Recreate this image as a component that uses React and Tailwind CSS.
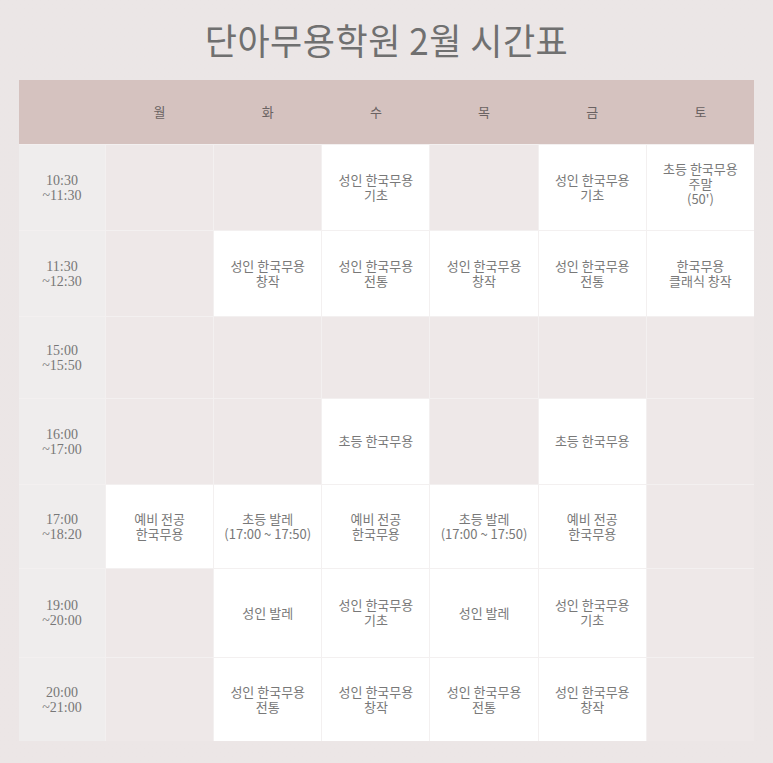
import React from "react";

const days = ["월", "화", "수", "목", "금", "토"];

const rows = [
  { time: ["10:30", "~11:30"], h: "h-[85px]", cells: [null, null, ["성인 한국무용", "기초"], null, ["성인 한국무용", "기초"], ["초등 한국무용", "주말", "(50')"]] },
  { time: ["11:30", "~12:30"], h: "h-[85px]", cells: [null, ["성인 한국무용", "창작"], ["성인 한국무용", "전통"], ["성인 한국무용", "창작"], ["성인 한국무용", "전통"], ["한국무용", "클래식 창작"]] },
  { time: ["15:00", "~15:50"], h: "h-[81px]", cells: [null, null, null, null, null, null] },
  { time: ["16:00", "~17:00"], h: "h-[85px]", cells: [null, null, ["초등 한국무용"], null, ["초등 한국무용"], null] },
  { time: ["17:00", "~18:20"], h: "h-[83px]", cells: [["예비 전공", "한국무용"], ["초등 발레", "(17:00 ~ 17:50)"], ["예비 전공", "한국무용"], ["초등 발레", "(17:00 ~ 17:50)"], ["예비 전공", "한국무용"], null] },
  { time: ["19:00", "~20:00"], h: "h-[88px]", cells: [null, ["성인 발레"], ["성인 한국무용", "기초"], ["성인 발레"], ["성인 한국무용", "기초"], null] },
  { time: ["20:00", "~21:00"], h: "h-[83px]", cells: [null, ["성인 한국무용", "전통"], ["성인 한국무용", "창작"], ["성인 한국무용", "전통"], ["성인 한국무용", "창작"], null] },
];

const ko = { fontFamily: '"Noto Sans CJK KR", "Noto Sans", sans-serif' };
const serif = { fontFamily: '"Liberation Serif", "Noto Sans CJK KR", serif' };

export default function App() {
  return (
    <div className="min-h-[763px] w-[773px] bg-gradient-to-b from-[#ebe6e6] to-[#ece6e6] px-[19px] pt-[16px] pb-[21px]">
      <h1
        className="text-center text-[35px] leading-[48px] font-normal tracking-[0.5px] text-[#707070] h-[64px] scale-y-[1.05]"
        style={ko}
      >
        단아무용학원 2월 시간표
      </h1>
      <div className="grid grid-cols-[86px_repeat(6,1fr)] gap-[1px] bg-[#d5c2bf]">
        <div className="h-[64px] bg-[#d5c2bf]" />
        {days.map((d) => (
          <div
            key={d}
            className="h-[64px] bg-[#d5c2bf] flex items-center justify-center text-[13px] text-[#6a6262]"
            style={ko}
          >
            {d}
          </div>
        ))}
      </div>
      <div className="grid grid-cols-[86px_repeat(6,1fr)] gap-[1px] bg-[#f3f0f0] pt-[1px]">
        {rows.map((r, i) => (
          <React.Fragment key={i}>
            <div
              className={`${r.h} bg-[#efeded] flex flex-col items-center justify-center text-[14px] leading-[15px] text-[#777]`}
              style={serif}
            >
              {r.time.map((t) => (
                <span key={t}>{t}</span>
              ))}
            </div>
            {r.cells.map((c, j) =>
              c ? (
                <div
                  key={j}
                  className={`${r.h} bg-white flex flex-col items-center justify-center text-[13px] leading-[15px] text-[#787878] ${c.length === 3 ? "pb-[8px]" : "pb-[2px]"}`}
                  style={ko}
                >
                  {c.map((t, k) => (
                    <span key={k}>{t}</span>
                  ))}
                </div>
              ) : (
                <div key={j} className={`${r.h} bg-[#eee8e8]`} />
              )
            )}
          </React.Fragment>
        ))}
      </div>
    </div>
  );
}
